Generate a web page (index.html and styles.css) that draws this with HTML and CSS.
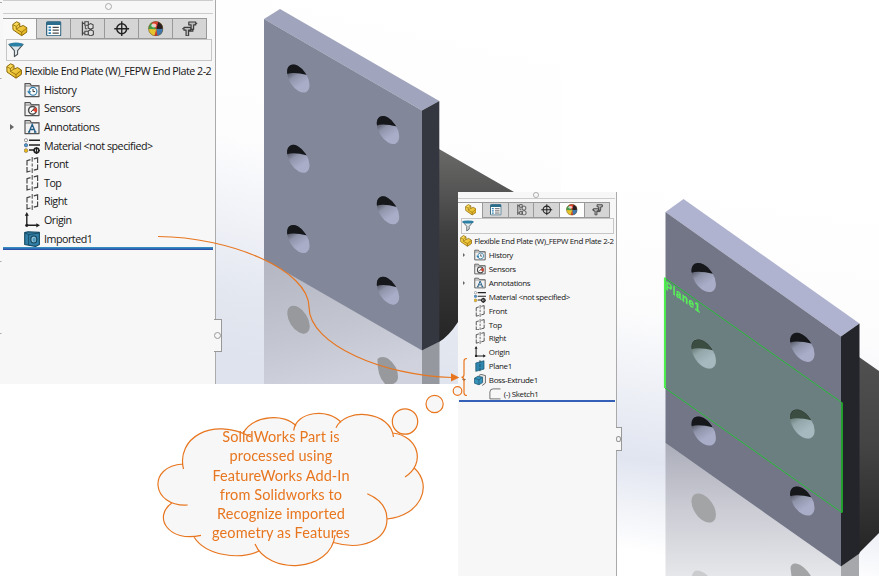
FILE: index.html
```html
<!DOCTYPE html>
<html lang="en">
<head>
<meta charset="utf-8">
<title>FeatureWorks feature recognition</title>
<link rel="stylesheet" href="styles.css">
</head>
<body>
<svg class="defs" width="0" height="0" aria-hidden="true">
  <defs>
    <linearGradient id="yel" x1="0" y1="0" x2="1" y2="1"><stop offset="0" stop-color="#ffe768"/><stop offset="1" stop-color="#e0ac18"/></linearGradient>
    <symbol id="i-part" viewBox="0 0 16 16">
      <path d="M.8 3.6 4.6 .8 8 2.4V6L11.6 4.6 15.4 7V11.4L10 15.2 1 9Z" fill="url(#yel)" stroke="#8a6508" stroke-width="1" stroke-linejoin="round"/>
      <path d="M1 3.8 4.4 5.6 7.8 2.8M4.4 5.6V8.4L10 11.6 15.2 7.4M10 11.6V15M4.400 8.400 8 6" fill="none" stroke="#8a6508" stroke-width=".8"/>
    </symbol>
    <symbol id="i-list" viewBox="0 0 16 16">
      <rect x=".7" y=".8" width="14.6" height="14.4" rx="1" fill="#fff" stroke="#265a74" stroke-width="1.2"/>
      <path d="M.7 1h14.6v3H.7z" fill="#2b6d8d"/>
      <path d="M2.6 6.5h2.6M2.6 9.5h2.6M2.6 12.5h2.6" stroke="#2c82b4" stroke-width="1.8"/>
      <path d="M6.8 6.5h6.4M6.8 9.5h6.4M6.8 12.5h6.4" stroke="#4a4a4a" stroke-width="1.2"/>
    </symbol>
    <symbol id="i-config" viewBox="0 0 16 16">
      <path d="M2.500 .5v14.500M2.500 2.500H5M2.500 12.500H5" fill="none" stroke="#444" stroke-width="1.3"/>
      <path d="M5 .8h3.600v3.600H5zM5 10.600h3.600v3.600H5zM8.500 4 11 2.700l2.500 1.200v3.400L11 8.600 8.500 7.300zM8.500 10.300 11 9l2.800 1.300V14l-2.600 1.400-2.700-1.300z" fill="#ddd" stroke="#444" stroke-width="1.1"/>
      <path d="M5.500 5v3h2" fill="none" stroke="#444" stroke-width="1"/>
    </symbol>
    <symbol id="i-target" viewBox="0 0 16 16">
      <circle cx="8" cy="8" r="5.1" fill="none" stroke="#222" stroke-width="1.5"/>
      <path d="M8 .3v15.4M.3 8h15.4" stroke="#222" stroke-width="1.4"/>
    </symbol>
    <symbol id="i-ball" viewBox="0 0 16 16">
      <circle cx="8" cy="8" r="7.6" fill="#e6c42c"/>
      <path d="M8.500 8.500 8 .4A7.600 7.600 0 0 0 .4 8.200Z" fill="#459b4c"/>
      <path d="M8.500 8.500 3.500 1.800A7.600 7.600 0 0 1 12 1.500Z" fill="#e2402f"/>
      <path d="M8.500 8.500 10.500 .8A7.600 7.600 0 0 1 15.400 8.500Z" fill="#2c1f22"/>
      <path d="M8.500 8.500 15.600 8A7.600 7.600 0 0 1 9.500 15.500Z" fill="#3e78b0"/>
      <path d="M8.500 8.500 9.800 15.400A7.600 7.600 0 0 1 6.500 15.500Z" fill="#c93a2d"/>
      <ellipse cx="6" cy="4.6" rx="2.600" ry="2" fill="#fff" opacity=".7"/>
      <circle cx="8" cy="8" r="7.400" fill="none" stroke="#6b5a3c" stroke-width=".6"/>
    </symbol>
    <symbol id="i-dim" viewBox="0 0 16 16">
      <path d="M7 1h7.2v3H12v4.6H9.4V4H7zM2 6.5h7v3H6.8v5.8H4.2V9.5H2zM6.8 10.5h4.4V8.5" fill="#bbb" stroke="#3d3d3d" stroke-width="1.2" stroke-linejoin="round"/>
      <path d="M14.2 2.5H16M0 8h2" stroke="#3d3d3d"/>
    </symbol>
    <symbol id="i-filter" viewBox="0 0 16 16">
      <path d="M1 2.4 6.4 8.6V14.6L9.6 12.3V8.6L15 2.4Z" fill="#dfe7ea" stroke="#4b5256" stroke-width="1.1" stroke-linejoin="round"/>
      <ellipse cx="8" cy="2.6" rx="7.4" ry="2" fill="#2a7fa5"/>
    </symbol>
    <symbol id="i-folder" viewBox="0 0 16 16">
      <path d="M1 14.6V1.6H6l1.3 2H15v11z" fill="#f1f1f1" stroke="#555" stroke-width="1.2" stroke-linejoin="round"/>
      <path d="M1 4h14" stroke="#777"/>
    </symbol>
    <symbol id="i-history" viewBox="0 0 16 16">
      <use href="#i-folder"/>
      <circle cx="9" cy="9.3" r="3.9" fill="#fff" stroke="#2f7dab" stroke-width="1.1"/>
      <path d="M9 7v2.6h2" fill="none" stroke="#333"/><path d="M3 9.2h4.4L5.2 12z" fill="#2f7dab"/>
    </symbol>
    <symbol id="i-sensors" viewBox="0 0 16 16">
      <use href="#i-folder"/>
      <circle cx="8.5" cy="9.3" r="3.9" fill="#fff" stroke="#4b4b4b" stroke-width="1.5"/>
      <path d="M8.5 9.3 12 6.2A4.5 4.5 0 0 1 12.4 11.5Z" fill="#e0402d"/><path d="M7 11 10.5 7" stroke="#333"/>
    </symbol>
    <symbol id="i-annot" viewBox="0 0 16 16">
      <use href="#i-folder"/>
      <path d="M5 13 8.2 5.4 11.4 13M6.2 10.5h4M4 13h2.2M10 13h2.4" fill="none" stroke="#245f88" stroke-width="1.3"/>
    </symbol>
    <symbol id="i-material" viewBox="0 0 16 16">
      <path d="M5 2.2h11M5 7h11M5 12h5" stroke="#222" stroke-width="1.4"/>
      <circle cx="2" cy="2.2" r="1.6" fill="#fff" stroke="#777" stroke-width=".8"/><circle cx="2" cy="7.2" r="1.7" fill="#4aa3cf" stroke="#336" stroke-width=".5"/><circle cx="2" cy="12.6" r="1.9" fill="#eabc17" stroke="#765" stroke-width=".6"/>
      <circle cx="12.5" cy="12.5" r="2.3" fill="none" stroke="#222" stroke-width="1.7"/><path d="M12.5 9v7M9 12.5h1.6M14.4 12.5H16" stroke="#222"/>
    </symbol>
    <symbol id="i-plane" viewBox="0 0 16 16">
      <path d="M3 8.500V3.600L6.500 2.600M9.800 1.800 13.600.8V6M13.600 7.500V12.200L9.800 13.200M6.500 14 3 15V10" fill="none" stroke="#444" stroke-width="1.2"/>
      <path d="M8.200 0v4.800M8.200 6.500v3M8.200 11.200V16" stroke="#555" stroke-width="1.1"/>
    </symbol>
    <symbol id="i-origin" viewBox="0 0 16 16">
      <path d="M2.8 2V13.3H14" fill="none" stroke="#222" stroke-width="1.4"/>
      <path d="M.8 3.8 2.8 0l2 3.8zM12.3 11.2 16 13.3l-3.7 2.1z" fill="#222"/><circle cx="2.8" cy="13.3" r="1.6" fill="#222"/>
    </symbol>
    <symbol id="i-import" viewBox="0 0 16 16">
      <path d="M.7 1.600 4 .700 15.400 1.400V13.500L11.500 15.400.7 13.500Z" fill="#317fa6" stroke="#164861" stroke-width="1.1" stroke-linejoin="round"/>
      <path d="M.9 1.800 4.600 3.600V14.200M4.600 3.600 15 2" fill="none" stroke="#164861" stroke-width=".9"/>
      <ellipse cx="9.8" cy="8.500" rx="3" ry="3.500" fill="#8fc1d8" stroke="#123f56" stroke-width="1.1"/><ellipse cx="10.200" cy="8.700" rx="1.5" ry="2" fill="#4b9abd"/>
    </symbol>
    <symbol id="i-bplane" viewBox="0 0 16 16">
      <path d="M2.4 4 13.4 1V12.2L2.4 15.2Z" fill="#2f86ae" stroke="#1e566f" stroke-width="1"/>
      <path d="M8 0v16" stroke="#15445b" stroke-width="1" stroke-dasharray="4 1.5"/>
    </symbol>
    <symbol id="i-boss" viewBox="0 0 16 16">
      <path d="M6.500 2 9.500.5 15.500 2.200V12L11 15.500" fill="#e7e7e7" stroke="#555" stroke-width="1.1"/>
      <path d="M.6 5.700 5.200 3 11.400 4.200V11.500L6.600 14.500.6 12.300Z" fill="#3794bd" stroke="#1d536b" stroke-width="1" stroke-linejoin="round"/>
      <path d="M.8 5.900 6.600 7.800V14.300M6.600 7.800 11.200 4.400" fill="none" stroke="#1d536b" stroke-width=".9"/>
    </symbol>
    <symbol id="i-sketch" viewBox="0 0 16 16">
      <path d="M15.4 1.2H5.6Q1.2 1.2 1.2 5.4V14.6H15.4" fill="none" stroke="#666" stroke-width="1.2"/>
    </symbol>

    <linearGradient id="bg1" x1=".62" y1="0" x2=".42" y2="1"><stop offset="0" stop-color="#fff"/><stop offset=".45" stop-color="#fdfdfe"/><stop offset=".85" stop-color="#e3e7f0"/><stop offset="1" stop-color="#dfe3ed"/></linearGradient>
    <linearGradient id="bg2" x1=".6" y1="0" x2=".5" y2="1"><stop offset="0" stop-color="#fff"/><stop offset=".36" stop-color="#fcfcfd"/><stop offset=".74" stop-color="#e1e5f0"/><stop offset=".98" stop-color="#fff"/></linearGradient>
    <linearGradient id="cyl" x1="0" y1="0" x2="0" y2="1"><stop offset="0" stop-color="#6a6a69"/><stop offset=".45" stop-color="#3e3e3e"/><stop offset="1" stop-color="#252526"/></linearGradient>
    <linearGradient id="cyl2" x1="0" y1="0" x2="0" y2="1"><stop offset="0" stop-color="#505050"/><stop offset=".45" stop-color="#444"/><stop offset="1" stop-color="#252526"/></linearGradient>
    <linearGradient id="ref1" x1=".1" y1="0" x2=".4" y2="1"><stop offset="0" stop-color="#b4b6c2"/><stop offset=".6" stop-color="#c3c5d0"/><stop offset="1" stop-color="#d0d2dd"/></linearGradient>
    <linearGradient id="ref2" x1="0" y1="0" x2="0" y2="1"><stop offset="0" stop-color="#abadb9"/><stop offset=".5" stop-color="#cbccd4"/><stop offset="1" stop-color="#e6e7ea"/></linearGradient>
    <linearGradient id="bore" x1=".1" y1=".15" x2=".55" y2=".95"><stop offset=".1" stop-color="#484b56"/><stop offset=".42" stop-color="#9094aa"/><stop offset=".8" stop-color="#a9adc8"/></linearGradient>
    <clipPath id="holeclip"><ellipse rx="9" ry="15.5" transform="rotate(-32)"/></clipPath>
    <g id="hole">
      <g clip-path="url(#holeclip)">
        <rect x="-13" y="-16" width="26" height="32" fill="url(#bore)"/>
        <path d="M-14-3 Q-8-8 9-3.400L10-17H-14Z" fill="#15171a"/>
      </g>
    </g>
    <ellipse id="shade" rx="9" ry="15.5" transform="rotate(-32)"/>
  </defs>
</svg>

<main class="stage">
  <svg class="scene" width="879" height="576" viewBox="0 0 879 576">
    <rect x="216" width="345" height="384" fill="url(#bg1)"/>
    <path d="M439 149 514 192V260L458 322Q449 336 439 342Z" fill="url(#cyl)"/>
    <path d="M264 259 422 350.5V384H264Z" fill="url(#ref1)"/>
    <path d="M422 350.5 439.5 341.5V384H422Z" fill="#96989f"/>
    <path d="M264 19 280 9 439.3 101 422 110.5Z" fill="#a0a4bc"/>
    <path d="M264 19 422 110.5V350.5L264 259.5Z" fill="#82879a"/>
    <path d="M422 110.5 439.3 101V341.8L422 350.5Z" fill="#343740"/>
    <use href="#hole" x="298.3" y="78.5"/><use href="#hole" x="388" y="130"/>
    <use href="#hole" x="298.3" y="158.8"/><use href="#hole" x="388" y="210.3"/>
    <use href="#hole" x="298.3" y="239"/><use href="#hole" x="388" y="290.7"/>
    <g fill="#97999c"><use href="#shade" transform="translate(298.5 319.7)"/><path d="M377.500 359Q381 355.500 388 358.500 398 366 398 377 398 382 393 384H385Q377 376 377.500 359Z"/></g>

    <rect x="561" y="0" width="318" height="192" fill="#fff"/>
    <rect x="616" y="192" width="263" height="384" fill="url(#bg2)"/>
    <path d="M859 357 879 371V533L859 553Z" fill="url(#cyl2)"/>
    <path d="M665.500 443 841 566.500V576H665.500Z" fill="url(#ref2)"/>
    <path d="M841 566.500 859 553.500V576H841Z" fill="#a7a8ac"/>
    <path d="M665.500 212 683.500 199 859.500 323.500 841 336.500Z" fill="#afb3cf"/>
    <path d="M665.500 212 841 336.500V566.500L665.500 443Z" fill="#737687"/>
    <path d="M841 336.500 859.500 323.500V553.500L841 566.500Z" fill="#23252b"/>
    <path d="M665 278 841.800 402.500V512.500L665 388Z" fill="#6c7f80"/>
    <use href="#hole" transform="translate(703.700 277.500) scale(1.090 1.040)"/><use href="#hole" transform="translate(802.300 347.300) scale(1.090 1.040)"/>
    <use href="#hole" transform="translate(703.700 354) scale(1.090 1.040)"/><use href="#hole" transform="translate(802.300 424) scale(1.090 1.040)"/>
    <use href="#hole" transform="translate(703.700 431) scale(1.090 1.040)"/><use href="#hole" transform="translate(802.300 501) scale(1.090 1.040)"/>
    <g fill="#9ed8a8" opacity=".28"><use href="#shade" transform="translate(703.700 354) scale(1.090 1.040)"/><use href="#shade" transform="translate(802.300 424) scale(1.090 1.040)"/></g>
    <g fill="#a3a4a6"><use href="#shade" transform="translate(703.700 508) scale(1.090 1.040)"/><path d="M790.500 568Q791 563 796 563.500 804 565 811 576H791.500Z"/></g>
    <path d="M692 576Q693 570 698 570.500 704 571.500 708 576Z" fill="#cbccce"/>
    <path d="M665 278 841.800 402.500V512.500L665 388Z" fill="none" stroke="#27bd38" stroke-width="1"/>
    <path d="M664.900 277.500V388" stroke="#4df04f" stroke-width="2"/>
    <path d="M842 402.500V512.500" stroke="#23a52e" stroke-width="1.800"/>
    <text class="plane-label" transform="matrix(.81 .57 0 1 665.800 289)" textLength="42">Plane1</text>
  </svg>

  <section class="panel panel-before">
    <div class="handle"></div>
    <nav class="tabs">
      <span class="tab on"><svg><use href="#i-part"/></svg></span><span class="tab"><svg><use href="#i-list"/></svg></span><span class="tab"><svg><use href="#i-config"/></svg></span><span class="tab"><svg><use href="#i-target"/></svg></span><span class="tab"><svg><use href="#i-ball"/></svg></span><span class="tab"><svg><use href="#i-dim"/></svg></span>
    </nav>
    <div class="filter"><svg><use href="#i-filter"/></svg></div>
    <ul class="tree">
      <li class="root"><svg><use href="#i-part"/></svg><span>Flexible End Plate (W)_FEPW End Plate 2-2</span></li>
      <li><svg><use href="#i-history"/></svg><span>History</span></li>
      <li><svg><use href="#i-sensors"/></svg><span>Sensors</span></li>
      <li class="closed"><svg><use href="#i-annot"/></svg><span>Annotations</span></li>
      <li><svg><use href="#i-material"/></svg><span>Material &lt;not specified&gt;</span></li>
      <li><svg><use href="#i-plane"/></svg><span>Front</span></li>
      <li><svg><use href="#i-plane"/></svg><span>Top</span></li>
      <li><svg><use href="#i-plane"/></svg><span>Right</span></li>
      <li><svg><use href="#i-origin"/></svg><span>Origin</span></li>
      <li><svg><use href="#i-import"/></svg><span>Imported1</span></li>
    </ul>
    <div class="rollback"></div>
    <div class="grip"></div>
  </section>

  <section class="panel panel-after">
    <div class="handle"></div>
    <nav class="tabs">
      <span class="tab on"><svg><use href="#i-part"/></svg></span><span class="tab"><svg><use href="#i-list"/></svg></span><span class="tab"><svg><use href="#i-config"/></svg></span><span class="tab"><svg><use href="#i-target"/></svg></span><span class="tab hot"><svg><use href="#i-ball"/></svg></span><span class="tab"><svg><use href="#i-dim"/></svg></span>
    </nav>
    <div class="filter"><svg><use href="#i-filter"/></svg></div>
    <ul class="tree">
      <li class="root"><svg><use href="#i-part"/></svg><span>Flexible End Plate (W)_FEPW End Plate 2-2</span></li>
      <li class="closed"><svg><use href="#i-history"/></svg><span>History</span></li>
      <li><svg><use href="#i-sensors"/></svg><span>Sensors</span></li>
      <li class="closed"><svg><use href="#i-annot"/></svg><span>Annotations</span></li>
      <li><svg><use href="#i-material"/></svg><span>Material &lt;not specified&gt;</span></li>
      <li><svg><use href="#i-plane"/></svg><span>Front</span></li>
      <li><svg><use href="#i-plane"/></svg><span>Top</span></li>
      <li><svg><use href="#i-plane"/></svg><span>Right</span></li>
      <li><svg><use href="#i-origin"/></svg><span>Origin</span></li>
      <li><svg><use href="#i-bplane"/></svg><span>Plane1</span></li>
      <li class="open"><svg><use href="#i-boss"/></svg><span>Boss-Extrude1</span></li>
      <li class="child"><svg><use href="#i-sketch"/></svg><span>(-) Sketch1</span></li>
    </ul>
    <div class="rollback"></div>
    <div class="grip"></div>
  </section>

  <svg class="scene" width="879" height="576" viewBox="0 0 879 576" fill="none" stroke="#e8761f" stroke-width="1.200">
    <path d="M0 2.500H2M0 78.500H1.500M0 261.500H1.500M0 333.500H1.500" stroke="#aaa" stroke-width="1"/>
    <path d="M158 236.500C230 237 309 270 309 307C309 345 385 376 452 377.500"/>
    <path d="M451 373.300 459.300 377.400 451 381.600Z" fill="#e8761f" stroke="none"/>
    <path d="M467 358.500Q464 358.500 464 361V374.500Q464 377.300 461.500 377.300 464 377.300 464 380V393Q464 395.500 467 395.500"/>
    <g fill="#f7f7f7"><circle cx="457.500" cy="391" r="4.300"/><circle cx="434.600" cy="404" r="8.600"/><circle cx="405" cy="421.500" r="12.700"/></g>
    <path fill="#f7f7f7" stroke="none" d="M183 464C180 440 205 420 244.500 432C254 415 285 413 296 426C302 412 329 409 341 422C352 409 386 412 392.700 433C414 436 422 454 414 467.700C434 486 420 516 387 519C387 540 362 551 333 542C325 571 277 572 259 551C240 560 206 556 194 537C163 539 155 516 172 502.700C152 493 154 466 183 464Z"/>
    <path d="M183.500 469C176 439 211 416 251 437M243.500 432.500C254 415 285 413 296 426M293.700 430.500C296 411 329 408 341 422.500M336 427.700C346 407 391 411 393.500 437M392.700 433C419 436 426 464 405 477M414 467.700C434 486 420 516 387 519M367.300 493.700C382 500 387 510 387 519C387 540 362 551 333.500 542.500M335 535C331 573 268 575 255 544M259 551C240 560 206 556 194 537M201 535.300C169 543 152 517 172 502.700M187.700 505C151 507 147 466 183 464"/>
  </svg>
  <p class="note">SolidWorks Part is<br>processed using<br>FeatureWorks Add-In<br>from Solidworks to<br>Recognize imported<br>geometry as Features</p>
</main>
</body>
</html>
```

FILE: styles.css
```css
* { box-sizing: border-box; }
body { margin: 0; background: #fff; font-family: "Open Sans", sans-serif; }
.defs { position: absolute; }
.stage { position: relative; width: 879px; height: 576px; overflow: hidden; }
.scene { position: absolute; left: 0; top: 0; display: block; }
.plane-label { font: 700 12px "Liberation Sans", sans-serif; fill: #57f258; stroke: #57f258; stroke-width: .3px; }

/* Feature tree window; every length inside is in em so both windows share it */
.panel { position: absolute; background: #f7f7f7; display: flex; flex-direction: column; border-right: 1px solid #aaa; }
.panel-before { left: 0; top: 0; width: 216px; height: 384px; font-size: 10px; }
.panel-after { left: 458px; top: 192px; width: 159px; height: 384px; font-size: 7.47px; }
.handle { height: 1.35em; margin: 0 .2em 0 .3em; border-bottom: 1px solid #ccc; display: flex; justify-content: center; align-items: center; flex: none; }
.handle::before { content: ""; width: .5em; height: .5em; border: 1px solid #aaa; border-radius: 50%; }
.panel-before .handle { border-top: 1px solid #ccc; }
.tabs { flex: none; display: flex; height: 2.15em; margin: .4em 0 0 .3em; }
.tab { width: 3.4em; background: #d5d5d5; border: 1px solid #999; border-left: 0; display: flex; align-items: center; justify-content: center; }
.tab.on { background: #f9f9f9; border-bottom: 0; }
.tab.hot { background: #fff; }
.tab svg { width: 1.55em; height: 1.55em; margin-left: .1em; }
.filter { flex: none; height: 2.15em; margin: 0 .3em 0 .6em; border: 1px solid #c6c6c6; display: flex; align-items: center; padding-left: .1em; }
.filter svg { width: 1.6em; height: 1.6em; }
.tree { list-style: none; margin: .15em 0 0; padding: 0; }
.tree li { height: 1.865em; padding-left: 2.4em; display: flex; align-items: center; position: relative; white-space: nowrap; color: #161616; }
.tree svg { width: 1.6em; height: 1.6em; margin-right: .4em; flex: none; }
.tree span { font-size: 1.07em; line-height: 1; letter-spacing: -.044em; }
.tree .root { padding-left: .55em; }
.tree .root svg { margin-right: .3em; }
.tree .root span { letter-spacing: -.045em; }
.closed::before { content: ""; position: absolute; left: 1em; border-left: .4em solid #666; border-top: .3em solid transparent; border-bottom: .3em solid transparent; }
.open::before { content: ""; position: absolute; left: .8em; border-top: .4em solid #555; border-left: .3em solid transparent; border-right: .3em solid transparent; }
.tree .child { padding-left: 4.4em; }
.rollback { flex: none; height: 2px; margin: 0 .2em 0 .3em; background: linear-gradient(#3a9ac4, #2846a4); }
.panel-before .rollback { height: 3px; margin-top: -1px; }
.grip { position: absolute; left: calc(100% - .1em); top: 31.9em; width: .8em; height: 3.3em; background: #f7f7f7; border: 1px solid #999; border-left: 0; display: flex; align-items: center; }
.grip::before { content: ""; width: .5em; height: .5em; border: 1px solid #999; border-radius: 50%; }

.panel-after .handle { height: .9em; margin-left: 0; }
.panel-after .tabs { margin-left: 0; }
.panel-after .filter { margin-left: .35em; }
.panel-after .tree { margin: .1em 0 0 -.27em; }
.panel-after .tree li { height: 1.855em; }
.panel-after .rollback { margin-left: .1em; margin-top: -1px; background: #3560b8; }
.panel-after .grip { left: 100%; top: 31.4em; }

.note { position: absolute; left: 201px; top: 427px; width: 160px; margin: 0; text-align: center; font: 14.500px/19.300px Lato, sans-serif; letter-spacing: .1px; color: #e8761f; white-space: nowrap; }
```
